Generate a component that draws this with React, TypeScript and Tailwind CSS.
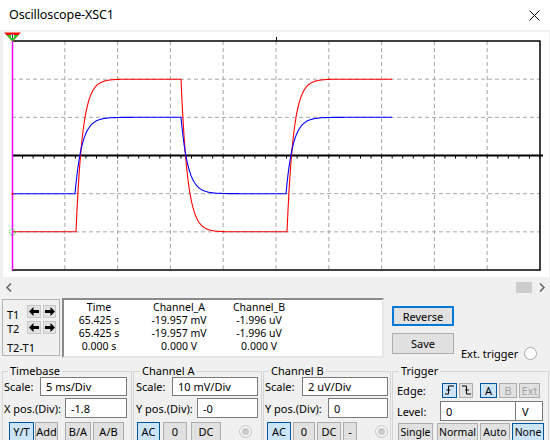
import React from "react";

const Y0 = 155.5;
const DY = 38.17;

function tracePoints(amp: number, tau: number, edges: number[]) {
  const pts: string[] = [];
  let v = -amp;
  for (let x = 12; x <= 392; x += 1) {
    const n = edges.filter((e) => e <= x).length;
    const target = n % 2 === 1 ? amp : -amp;
    if (x > 12) v = target + (v - target) * Math.exp(-1 / tau);
    pts.push(`${x},${(Y0 - v * DY).toFixed(1)}`);
  }
  return pts.join(" ");
}

function Plot() {
  const vx = Array.from({ length: 9 }, (_, k) => 12 + 52.8 * (k + 1));
  const hy = [1, 2, 4, 5].map((j) => 41 + DY * j);
  const ticks = Array.from({ length: 50 }, (_, k) => 12 + 10.56 * (k + 1));
  const red = tracePoints(2, 6.5, [76.5, 182, 287.5]);
  const blue = tracePoints(1, 7, [75.5, 181.5, 287]);
  return (
    <svg width={546} height={245} viewBox="3 32 546 245" className="block">
      {vx.map((x, i) => (
        <line key={"v" + i} x1={x} y1={41} x2={x} y2={270} stroke="#a6a6a6" strokeWidth={1} strokeDasharray="4 3" />
      ))}
      {hy.map((y, i) => (
        <line key={"h" + i} x1={12} y1={y} x2={540} y2={y} stroke="#a6a6a6" strokeWidth={1} strokeDasharray="4 3" />
      ))}
      <line x1={12} y1={41} x2={540.5} y2={41} stroke="#000" strokeWidth={1.5} />
      <line x1={12} y1={270} x2={540.5} y2={270} stroke="#000" strokeWidth={1.5} />
      <line x1={540} y1={41} x2={540} y2={270.5} stroke="#000" strokeWidth={1.5} />
      <line x1={12} y1={Y0} x2={543} y2={Y0} stroke="#000" strokeWidth={2} />
      {ticks.map((x, i) => (
        <line key={"t" + i} x1={x} y1={Y0} x2={x} y2={Y0 + 3} stroke="#000" strokeWidth={1} />
      ))}
      <line x1={276.5} y1={37} x2={276.5} y2={41} stroke="#000" strokeWidth={1} />
      <polyline points={red} fill="none" stroke="#ff0000" strokeWidth={1.1} />
      <polyline points={blue} fill="none" stroke="#0000ff" strokeWidth={1.1} />
      <line x1={12.5} y1={36} x2={12.5} y2={270} stroke="#ff00ff" strokeWidth={1.5} />
      <polygon points="4,32.5 21,32.5 12.5,41.5" fill="#ff0000" />
      <polygon points="6.5,35 18.5,35 12.5,41.5" fill="#22cc22" />
      <rect x={11} y={34.5} width={3} height={3.5} fill="#ffffff" />
      <line x1={12.5} y1={34.5} x2={12.5} y2={38} stroke="#000" strokeWidth={0.8} />
      <circle cx={12.5} cy={232} r={3} fill="none" stroke="#22cc22" strokeWidth={1} strokeDasharray="1.5 1" />
      <circle cx={12.5} cy={194} r={1} fill="#ff0000" />
    </svg>
  );
}

function Btn({
  children,
  w,
  h = "h-full",
  sel = false,
  dis = false,
  extra = "",
}: {
  children: React.ReactNode;
  w: string;
  h?: string;
  sel?: boolean;
  dis?: boolean;
  extra?: string;
}) {
  return (
    <div
      className={`${w} ${h} ${extra} shrink-0 flex items-center justify-center border whitespace-nowrap ${
        sel ? "bg-[#cce4f7] border-[#005499]" : "bg-[#e1e1e1] border-[#adadad]"
      } ${dis ? "text-[#a3a3a3]" : "text-black"}`}
    >
      {children}
    </div>
  );
}

function Input({ children, w, h }: { children: React.ReactNode; w: string; h: string }) {
  return (
    <div className={`${w} ${h} shrink-0 bg-white border border-[#7a7a7a] flex items-center pl-[5px]`}>{children}</div>
  );
}

function Radio({ disabled = false, extra = "" }: { disabled?: boolean; extra?: string }) {
  return disabled ? (
    <div className={`${extra} w-[13px] h-[13px] rounded-full border border-[#c4c4c4] bg-[#f4f4f4] flex items-center justify-center shrink-0`}>
      <div className="w-[7px] h-[7px] rounded-full bg-[#c8c8c8]" />
    </div>
  ) : (
    <div className={`${extra} w-[13px] h-[13px] rounded-full border border-[#a8a8a8] bg-white shrink-0`} />
  );
}

function Arrow({ dir }: { dir: "l" | "r" }) {
  return (
    <svg width={10} height={9} viewBox="0 0 10 9">
      {dir === "l" ? (
        <polygon points="0,4.5 4.5,0 4.5,3 10,3 10,6 4.5,6 4.5,9" fill="#000" />
      ) : (
        <polygon points="10,4.5 5.5,0 5.5,3 0,3 0,6 5.5,6 5.5,9" fill="#000" />
      )}
    </svg>
  );
}

function ArrowBtn({ dir, w }: { dir: "l" | "r"; w: string }) {
  return (
    <div className={`${w} h-[13px] bg-[#e1e1e1] border border-[#c8c8c8] flex items-center justify-center`}>
      <Arrow dir={dir} />
    </div>
  );
}

export default function App() {
  return (
    <div className="w-[550px] h-[440px] overflow-hidden bg-[#f0f0f0] text-black font-['Noto_Sans',sans-serif] text-[11px] leading-[13px]">
      {/* title bar */}
      <div className="h-[30px] bg-white flex items-center justify-between pl-[9px] pr-[10px]">
        <span className="text-[12.5px] leading-[16px] tracking-[-0.1px]">Oscilloscope-XSC1</span>
        <svg width={11} height={11} viewBox="0 0 11 11">
          <path d="M0.5 0.5 L10.5 10.5 M10.5 0.5 L0.5 10.5" stroke="#000" strokeWidth={1} />
        </svg>
      </div>

      {/* plot */}
      <div className="mt-[2px] ml-[3px] w-[546px] h-[245px] bg-white">
        <Plot />
      </div>

      {/* scroll bar */}
      <div className="h-[21px] flex items-center pl-[6px] pr-[5px]">
        <svg width={6} height={9} viewBox="0 0 6 9">
          <path d="M5 0.5 L1 4.5 L5 8.5" fill="none" stroke="#606060" strokeWidth={1.5} />
        </svg>
        <div className="flex-1" />
        <div className="w-[16px] h-[11px] bg-[#cdcdcd]" />
        <svg width={6} height={9} viewBox="0 0 6 9" className="ml-[7px]">
          <path d="M1 0.5 L5 4.5 L1 8.5" fill="none" stroke="#606060" strokeWidth={1.5} />
        </svg>
      </div>

      {/* middle row */}
      <div className="flex h-[67px] pl-[2px]">
        <div className="mt-[1px] w-[58px] h-[57px] border border-[#b4b4b4] pt-[5px] pl-[4px]">
          <div className="flex items-center h-[13px]">
            <span className="w-[20px] mt-[5px]">T1</span>
            <ArrowBtn dir="l" w="w-[14px]" />
            <div className="ml-[2px]">
              <ArrowBtn dir="r" w="w-[13px]" />
            </div>
          </div>
          <div className="flex items-center h-[13px] mt-[3px]">
            <span className="w-[20px] mt-[2px]">T2</span>
            <ArrowBtn dir="l" w="w-[14px]" />
            <div className="ml-[2px]">
              <ArrowBtn dir="r" w="w-[13px]" />
            </div>
          </div>
          <div className="mt-[7px] h-[13px]">T2-T1</div>
        </div>

        <div className="ml-[2px] w-[322px] h-[60px] bg-white border-2 border-t-[#8a8a8a] border-l-[#8a8a8a] border-r-[#e6e6e6] border-b-[#e6e6e6] pt-[1px]">
          <div className="grid grid-cols-[70px_90px_70px] text-center text-[10.5px] leading-[13px]">
            <span>Time</span>
            <span>Channel_A</span>
            <span>Channel_B</span>
            <span>65.425 s</span>
            <span>-19.957 mV</span>
            <span>-1.996 uV</span>
            <span>65.425 s</span>
            <span>-19.957 mV</span>
            <span>-1.996 uV</span>
            <span>0.000 s</span>
            <span>0.000 V</span>
            <span>0.000 V</span>
          </div>
        </div>

        <div className="ml-[8px] pt-[8px]">
          <div className="w-[62px] h-[20px] bg-[#e1e1e1] border-2 border-[#0078d7] flex items-center justify-center">
            Reverse
          </div>
          <div className="flex items-start mt-[7px]">
            <Btn w="w-[62px]" h="h-[21px]">
              Save
            </Btn>
            <div className="ml-[7px] mt-[13px] h-[14px] flex items-center">
              <span>Ext. trigger</span>
              <Radio extra="ml-[6px]" />
            </div>
          </div>
        </div>
      </div>

      {/* bottom groups */}
      <div className="flex">
        <fieldset className="ml-[2px] w-[130px] h-[80px] border border-[#d5d5d5] min-w-0">
          <legend className="ml-[5px] px-[2px] leading-[12px]">Timebase</legend>
          <div className="flex items-center h-[19px] pl-[1px]">
            <span className="w-[36px] shrink-0">Scale:</span>
            <Input w="w-[87px]" h="h-[19px]">5 ms/Div</Input>
          </div>
          <div className="flex items-center h-[20px] mt-[2px] pl-[1px]">
            <span className="w-[61px] shrink-0 whitespace-nowrap">X pos.(Div):</span>
            <Input w="w-[62px]" h="h-[20px]">-1.8</Input>
          </div>
          <div className="flex h-[19px] mt-[4px] pl-[6px]">
            <Btn w="w-[25px]" sel>
              Y/T
            </Btn>
            <Btn w="w-[23px]" extra="ml-[1px]">
              Add
            </Btn>
            <Btn w="w-[26px]" extra="ml-[7px]">
              B/A
            </Btn>
            <Btn w="w-[31px]" extra="ml-[2px]">
              A/B
            </Btn>
          </div>
        </fieldset>

        <fieldset className="ml-[1px] w-[129px] h-[80px] border border-[#d5d5d5] min-w-0">
          <legend className="ml-[6px] px-[2px] leading-[12px]">Channel A</legend>
          <div className="flex items-center h-[19px] pl-[2px]">
            <span className="w-[36px] shrink-0">Scale:</span>
            <Input w="w-[86px]" h="h-[19px]">10 mV/Div</Input>
          </div>
          <div className="flex items-center h-[20px] mt-[2px] pl-[2px]">
            <span className="w-[61px] shrink-0 whitespace-nowrap">Y pos.(Div):</span>
            <Input w="w-[61px]" h="h-[20px]">-0</Input>
          </div>
          <div className="flex items-center h-[19px] mt-[4px] pl-[3px]">
            <Btn w="w-[23px]" sel>
              AC
            </Btn>
            <Btn w="w-[24px]" extra="ml-[3px]">
              0
            </Btn>
            <Btn w="w-[30px]" extra="ml-[4px]">
              DC
            </Btn>
            <Radio disabled extra="ml-[18px]" />
          </div>
        </fieldset>

        <fieldset className="ml-[1px] w-[128px] h-[80px] border border-[#d5d5d5] min-w-0">
          <legend className="ml-[5px] px-[2px] leading-[12px]">Channel B</legend>
          <div className="flex items-center h-[19px] pl-[1px]">
            <span className="w-[37px] shrink-0">Scale:</span>
            <Input w="w-[86px]" h="h-[19px]">2 uV/Div</Input>
          </div>
          <div className="flex items-center h-[20px] mt-[2px] pl-[1px]">
            <span className="w-[63px] shrink-0 whitespace-nowrap">Y pos.(Div):</span>
            <Input w="w-[60px]" h="h-[20px]">0</Input>
          </div>
          <div className="flex items-center h-[19px] mt-[4px] pl-[3px]">
            <Btn w="w-[24px]" sel>
              AC
            </Btn>
            <Btn w="w-[22px]" extra="ml-[2px]">
              0
            </Btn>
            <Btn w="w-[24px]" extra="ml-[2px]">
              DC
            </Btn>
            <Btn w="w-[14px]" extra="ml-[2px]">
              -
            </Btn>
            <Radio disabled extra="ml-[18px]" />
          </div>
        </fieldset>

        <fieldset className="ml-[1px] w-[157px] h-[80px] border border-[#d5d5d5] min-w-0">
          <legend className="ml-[6px] px-[2px] leading-[12px]">Trigger</legend>
          <div className="flex items-center h-[20px] mt-[3px] pl-[4px]">
            <span className="w-[45px] shrink-0">Edge:</span>
            <Btn w="w-[15px]" h="h-[15px]" sel>
              <svg width={9} height={10} viewBox="0 0 9 10">
                <path d="M0 9 H3.5 V1 H9 M1.5 5 H5.5" fill="none" stroke="#000" strokeWidth={1} />
              </svg>
            </Btn>
            <Btn w="w-[14px]" h="h-[15px]" extra="ml-[2px]">
              <svg width={9} height={10} viewBox="0 0 9 10">
                <path d="M0 1 H4.5 V9 H9 M3 5 H7" fill="none" stroke="#000" strokeWidth={1} />
              </svg>
            </Btn>
            <Btn w="w-[17px]" h="h-[15px]" sel extra="ml-[7px]">
              A
            </Btn>
            <Btn w="w-[18px]" h="h-[15px]" dis extra="ml-[2px]">
              B
            </Btn>
            <Btn w="w-[21px]" h="h-[15px]" dis extra="ml-[2px]">
              Ext
            </Btn>
          </div>
          <div className="flex items-center h-[20px] mt-[1px] pl-[4px]">
            <span className="w-[43px] shrink-0">Level:</span>
            <Input w="w-[76px]" h="h-[20px]">0</Input>
            <div className="-ml-px w-[28px] h-[20px] bg-white border border-[#7a7a7a] flex items-center pl-[6px]">V</div>
          </div>
          <div className="flex h-[18px] mt-[2px] pl-[5px] text-[10.5px]">
            <Btn w="w-[35px]">Single</Btn>
            <Btn w="w-[41px]" extra="ml-[4px]">
              Normal
            </Btn>
            <Btn w="w-[30px]" extra="ml-[2px]">
              Auto
            </Btn>
            <Btn w="w-[32px]" sel extra="ml-[2px]">
              None
            </Btn>
          </div>
        </fieldset>
      </div>
    </div>
  );
}
